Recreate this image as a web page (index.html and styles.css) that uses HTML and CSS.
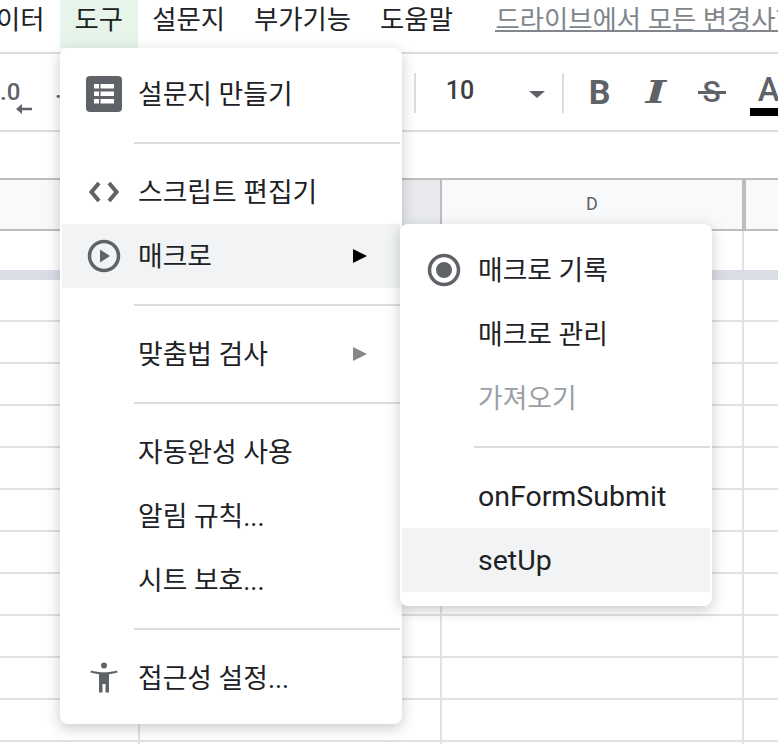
FILE: index.html
```html
<!DOCTYPE html>
<html lang="ko">
<head>
  <meta charset="UTF-8">
  <title>Sheets 도구 메뉴</title>
  <link rel="stylesheet" href="styles.css">
</head>
<body>

<div class="menubar">
  <span class="top-item first">이터</span>
  <span class="top-item active">도구</span>
  <span class="top-item">설문지</span>
  <span class="top-item">부가기능</span>
  <span class="top-item">도움말</span>
  <a class="save-link">드라이브에서 모든 변경사항을 저장했습니다</a>
</div>

<div class="toolbar">
  <div class="decimal">
    <span class="decimal-text">.0</span>
    <svg width="16" height="10" viewBox="0 0 16 10"><path d="M16 3.800H6V0L0 5l6 5V6.200h10z" fill="#5f6368"/></svg>
  </div>
  <span class="decimal-next">.</span>
  <div class="tool-sep first-sep"></div>
  <div class="font-size">10<span class="caret"></span></div>
  <div class="tool-sep"></div>
  <span class="tool bold">B</span>
  <span class="tool italic">I</span>
  <span class="tool strike">S</span>
  <span class="tool color">A<span class="color-bar"></span></span>
</div>

<div class="formula-bar"></div>

<div class="col-head">
  <div class="col-cell col-a"></div>
  <div class="col-cell col-b"></div>
  <div class="col-cell col-d">D</div>
  <div class="col-cell"></div>
</div>

<div class="grid">
  <div class="frozen-row"></div>
  <div class="frozen-bar"></div>
  <div class="rows"></div>
</div>

<div class="menu tools-menu">
  <div class="item">
    <span class="icon">
      <svg width="36" height="36" viewBox="0 0 36 36">
        <rect width="36" height="36" rx="4" fill="#5f6368"/>
        <path d="M8 8h5v4.500H8zM14.500 8H28v4.500H14.500zM8 15.500h5v4.500H8zM14.500 15.500H28v4.500H14.500zM8 23h5v4.500H8zM14.500 23H28v4.500H14.500z" fill="#fff"/>
      </svg>
    </span>
    <span class="label">설문지 만들기</span>
  </div>
  <div class="sep"></div>
  <div class="item">
    <span class="icon">
      <svg width="36" height="24" viewBox="0 0 36 24" fill="none" stroke="#5f6368" stroke-width="4">
        <path d="M13 3 5.500 12 13 21M23 3l7.500 9L23 21"/>
      </svg>
    </span>
    <span class="label">스크립트 편집기</span>
  </div>
  <div class="item hover">
    <span class="icon">
      <svg width="36" height="36" viewBox="0 0 36 36">
        <circle cx="18" cy="18" r="14.500" fill="none" stroke="#5f6368" stroke-width="3.500"/>
        <path d="M14 11.500v13L24 18z" fill="#5f6368"/>
      </svg>
    </span>
    <span class="label">매크로</span>
    <span class="arrow"></span>
  </div>
  <div class="sep"></div>
  <div class="item">
    <span class="icon"></span>
    <span class="label">맞춤법 검사</span>
    <span class="arrow dim"></span>
  </div>
  <div class="sep"></div>
  <div class="item">
    <span class="icon"></span>
    <span class="label">자동완성 사용</span>
  </div>
  <div class="item">
    <span class="icon"></span>
    <span class="label">알림 규칙...</span>
  </div>
  <div class="item">
    <span class="icon"></span>
    <span class="label">시트 보호...</span>
  </div>
  <div class="sep"></div>
  <div class="item">
    <span class="icon">
      <svg width="36" height="36" viewBox="0 0 36 36" fill="#5f6368">
        <g transform="translate(0 2)">
          <circle cx="18" cy="3.500" r="3"/>
          <path d="M5 8.500c4 1.200 8 1.800 13 1.800s9-.6 13-1.800l.500 2c-2.800.9-5.500 1.400-8.500 1.700v18.300h-3.500V22h-3v8.500H13V12.200c-3-.3-5.700-.8-8.500-1.700z"/>
        </g>
      </svg>
    </span>
    <span class="label">접근성 설정...</span>
  </div>
</div>

<div class="menu macro-menu">
  <div class="item">
    <span class="icon">
      <svg width="36" height="36" viewBox="0 0 36 36">
        <circle cx="18" cy="18" r="14.500" fill="none" stroke="#5f6368" stroke-width="3.500"/>
        <circle cx="18" cy="18" r="8" fill="#5f6368"/>
      </svg>
    </span>
    <span class="label">매크로 기록</span>
  </div>
  <div class="item">
    <span class="icon"></span>
    <span class="label">매크로 관리</span>
  </div>
  <div class="item disabled">
    <span class="icon"></span>
    <span class="label">가져오기</span>
  </div>
  <div class="sep"></div>
  <div class="item">
    <span class="icon"></span>
    <span class="label latin">onFormSubmit</span>
  </div>
  <div class="item hover">
    <span class="icon"></span>
    <span class="label latin">setUp</span>
  </div>
</div>

</body>
</html>
```

FILE: styles.css
```css
body {
  margin: 0;
  width: 778px;
  height: 744px;
  overflow: hidden;
  position: relative;
  background: #fff;
  color: #202124;
  font-family: Roboto, "Noto Sans CJK KR", sans-serif;
}

/* top menu */
.menubar {
  display: flex;
  height: 52px;
  border-bottom: 2px solid #dadce0;
  font-size: 26.400px;
  white-space: nowrap;
}

.top-item {
  height: 48px;
  line-height: 40px;
  padding: 0 14.500px;
}

.top-item.first {
  margin-left: -4px;
  padding: 0 15.500px 0 0;
}

.top-item.active {
  background: #e6f4ea;
}

.save-link {
  margin-left: 28px;
  height: 30px;
  line-height: 40px;
  color: #80868b;
  border-bottom: 2px solid #80868b;
}

/* toolbar */
.toolbar {
  display: flex;
  align-items: center;
  height: 76px;
  border-bottom: 2px solid #dadce0;
  color: #5f6368;
  white-space: nowrap;
}

.toolbar > * {
  flex: none;
}

.decimal {
  display: flex;
  flex-direction: column;
  align-items: flex-end;
  width: 32px;
  margin-top: 10px;
  font-size: 24px;
  font-weight: 500;
  line-height: 22px;
}

.decimal-text {
  align-self: flex-start;
}

.decimal svg {
  display: block;
  margin-top: 1px;
}

.decimal-next {
  margin-left: 23px;
  margin-top: -4px;
  font-size: 24px;
  font-weight: 500;
}

.tool-sep {
  width: 2px;
  height: 40px;
  margin-top: 2px;
  background: #dadce0;
}

.first-sep {
  margin-left: 352px;
}

.font-size {
  display: flex;
  align-items: center;
  width: 146px;
  margin-top: -4px;
  padding-left: 30px;
  box-sizing: border-box;
  color: #3c4043;
  font-size: 25px;
  font-weight: 500;
}

.caret {
  margin-left: 55px;
  margin-top: 9px;
  border-top: 7px solid #5f6368;
  border-left: 8px solid transparent;
  border-right: 8px solid transparent;
}

.tool {
  position: relative;
  width: 54px;
  text-align: center;
  font-size: 33px;
  line-height: 40px;
}

.bold {
  margin-left: 10px;
  width: 52px;
  font-size: 34px;
  font-weight: 700;
}

.italic {
  margin-left: 3px;
  font-family: "DejaVu Serif", serif;
  font-weight: 700;
  font-style: italic;
  font-size: 31px;
  transform: scaleX(1.4);
}

.strike {
  margin-left: 2px;
  font-size: 30px;
  font-weight: 500;
}

.strike::after {
  content: "";
  position: absolute;
  left: 13px;
  top: 19px;
  width: 28px;
  height: 3px;
  background: #5f6368;
}

.color {
  width: 40px;
  margin-left: 11px;
  margin-top: -4px;
  padding-left: 8px;
  font-weight: 500;
  text-align: left;
}

.color-bar {
  position: absolute;
  left: 0;
  top: 38px;
  width: 40px;
  height: 8px;
  background: #000;
}

.formula-bar {
  height: 46px;
}

/* sheet */
.col-head {
  display: flex;
  height: 49px;
  border-top: 2px solid #bdbdbd;
  border-bottom: 2px solid #bdbdbd;
  background: #f8f9fa;
  color: #5f6368;
  font-size: 18px;
}

.col-cell {
  flex: none;
  height: 100%;
  border-right: 2px solid #bdbdbd;
  box-sizing: border-box;
  text-align: center;
  line-height: 48px;
}

.col-a { width: 140px; }
.col-b { width: 302px; background: #e8eaed; }
.col-d { width: 302px; }

.grid {
  height: 513px;
  background-image: linear-gradient(to right, #e1e1e1 2px, transparent 2px), linear-gradient(to right, #e1e1e1 2px, transparent 2px), linear-gradient(to right, #e1e1e1 2px, transparent 2px);
  background-size: 2px 100%, 2px 100%, 2px 100%;
  background-position: 138px 0, 440px 0, 742px 0;
  background-repeat: no-repeat;
}

.frozen-row {
  height: 39px;
}

.frozen-bar {
  height: 10px;
  background: #dadde6;
}

.rows {
  height: 464px;
  background-image: linear-gradient(to bottom, transparent 40px, #e1e1e1 40px);
  background-size: 100% 42px;
}

/* menus */
.menu {
  position: absolute;
  box-sizing: border-box;
  padding: 14px 2px;
  background: #fff;
  border-radius: 8px;
  box-shadow: 0 4px 14px rgba(60, 64, 67, 0.28);
  font-size: 26.800px;
}

.tools-menu {
  left: 60px;
  top: 48px;
  width: 342px;
}

.macro-menu {
  left: 400px;
  top: 224px;
  width: 312px;
}

.item {
  display: flex;
  align-items: center;
  height: 64px;
  padding-left: 24px;
}

.item.hover {
  background: #f1f3f4;
}

.item.disabled {
  color: #9aa0a6;
}

.icon {
  flex: none;
  display: flex;
  justify-content: center;
  width: 36px;
  margin-right: 16px;
}

.label {
  flex: 1;
  padding-bottom: 3px;
}

.label.latin {
  font-size: 28.500px;
  padding-bottom: 0;
}

.arrow {
  margin-right: 33px;
  border-left: 14px solid #000;
  border-top: 7px solid transparent;
  border-bottom: 7px solid transparent;
}

.arrow.dim {
  border-left-color: #888;
}

.sep {
  height: 2px;
  margin: 16px 0 16px 72px;
  background: #dadce0;
}
```
